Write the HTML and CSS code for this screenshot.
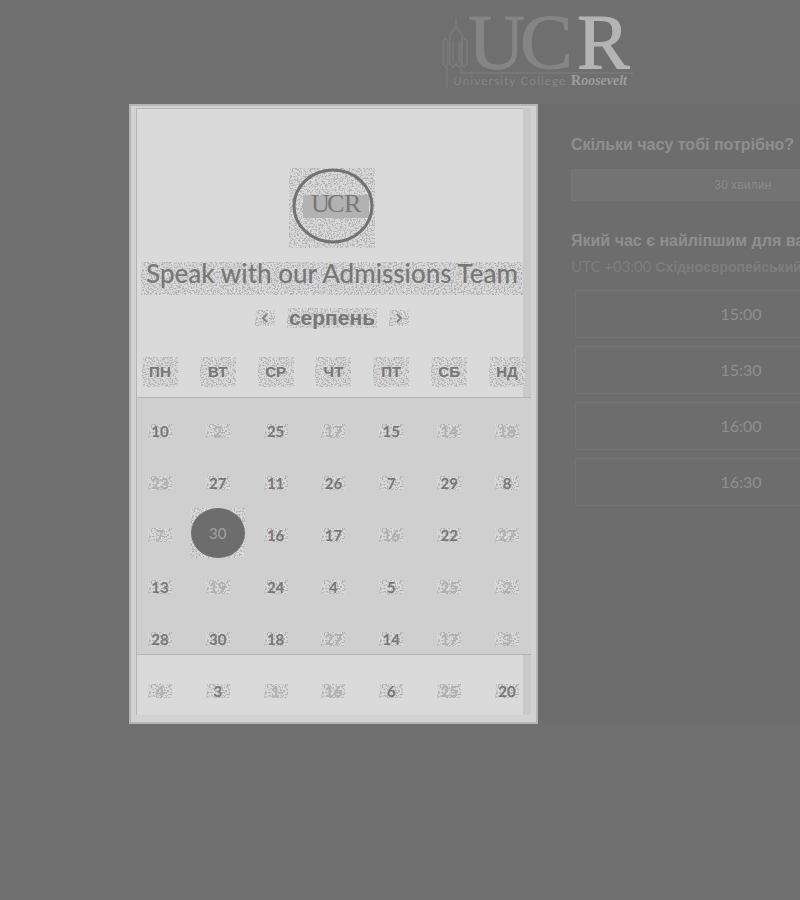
FILE: index.html
```html
<!DOCTYPE html>
<html lang="uk">
<head>
<meta charset="utf-8">
<meta name="viewport" content="width=device-width, initial-scale=1">
<title>Speak with our Admissions Team</title>
<link rel="stylesheet" href="styles.css">
</head>
<body>
<div class="page">
  <header class="brand">
    <svg class="brand-logo" viewBox="0 0 192 78" role="img" aria-label="University College Roosevelt">
      <g class="tower">
        <path d="M14 6v9M14 14l-6 9v4M14 14l6 9v4M8 27v25l3 3 3-3 3 3 3-3V27M11 29v22M17 29v22M1 29l2-3 3 3v23l-2 3-3-3zM19 29l2-3 4 3v23l-3 3-3-3zM5 55v21M19 55v6h172"/>
      </g>
      <g class="letters">
        <text x="26" y="56">U</text>
        <text x="78" y="56">C</text>
        <text class="letter-r" x="135" y="56">R</text>
      </g>
      <text class="tagline" x="11" y="73">University College</text>
      <text class="tagline-name" x="129" y="73">R<tspan class="tagline-italic">oosevelt</tspan></text>
    </svg>
  </header>
  <main class="booking">
    <section class="card">
      <div class="card-head">
        <div class="avatar grain">
          <svg viewBox="0 0 86 80" role="img" aria-label="UCR">
            <rect class="avatar-band" x="14" y="27" width="66" height="23"/>
            <ellipse class="avatar-ring" cx="44" cy="38" rx="39" ry="36"/>
            <text x="22" y="44">U</text><text x="38" y="44">C</text><text x="55" y="44">R</text>
          </svg>
        </div>
        <h1><span class="grain">Speak with our Admissions Team</span></h1>
        <div class="month">
          <button type="button" class="grain" aria-label="Попередній місяць"><svg viewBox="0 0 8 10"><path d="M6 1L2 5l4 4"/></svg></button>
          <h2 class="grain">серпень</h2>
          <button type="button" class="grain" aria-label="Наступний місяць"><svg viewBox="0 0 8 10"><path d="M2 1l4 4-4 4"/></svg></button>
        </div>
      </div>
      <table class="calendar">
        <thead>
          <tr><th><span class="grain">ПН</span></th><th><span class="grain">ВТ</span></th><th><span class="grain">СР</span></th><th><span class="grain">ЧТ</span></th><th><span class="grain">ПТ</span></th><th><span class="grain">СБ</span></th><th><span class="grain">НД</span></th></tr>
        </thead>
        <tbody>
          <tr><td><button class="day grain">10</button></td><td><button class="day grain off">2</button></td><td><button class="day grain">25</button></td><td><button class="day grain off">17</button></td><td><button class="day grain">15</button></td><td><button class="day grain off">14</button></td><td><button class="day grain off">18</button></td></tr>
          <tr><td><button class="day grain off">23</button></td><td><button class="day grain">27</button></td><td><button class="day grain">11</button></td><td><button class="day grain">26</button></td><td><button class="day grain">7</button></td><td><button class="day grain">29</button></td><td><button class="day grain">8</button></td></tr>
          <tr><td><button class="day grain off">7</button></td><td><div class="chosen grain"><button class="day-chosen">30</button></div></td><td><button class="day grain">16</button></td><td><button class="day grain">17</button></td><td><button class="day grain off">16</button></td><td><button class="day grain">22</button></td><td><button class="day grain off">27</button></td></tr>
          <tr><td><button class="day grain">13</button></td><td><button class="day grain off">19</button></td><td><button class="day grain">24</button></td><td><button class="day grain">4</button></td><td><button class="day grain">5</button></td><td><button class="day grain off">25</button></td><td><button class="day grain off">2</button></td></tr>
          <tr><td><button class="day grain">28</button></td><td><button class="day grain">30</button></td><td><button class="day grain">18</button></td><td><button class="day grain off">27</button></td><td><button class="day grain">14</button></td><td><button class="day grain off">17</button></td><td><button class="day grain off">3</button></td></tr>
          <tr><td><button class="day grain off">4</button></td><td><button class="day grain">3</button></td><td><button class="day grain off">1</button></td><td><button class="day grain off">16</button></td><td><button class="day grain">6</button></td><td><button class="day grain off">25</button></td><td><button class="day grain">20</button></td></tr>
        </tbody>
      </table>
    </section>
    <section class="times">
      <h3>Скільки часу тобі потрібно?</h3>
      <button type="button" class="duration">30 хвилин</button>
      <h3>Який час є найліпшим для вас?</h3>
      <p class="zone">UTC +03:00 <b>Східноєвропейський час</b></p>
      <div class="slots">
        <button type="button">15:00</button>
        <button type="button">15:30</button>
        <button type="button">16:00</button>
        <button type="button">16:30</button>
      </div>
    </section>
  </main>
</div>
</body>
</html>
```
FILE: styles.css
```css
* { box-sizing: border-box; }

body {
  margin: 0;
  background: #6f6f6f;
  color: #8f8f8f;
  font-family: Lato, "Liberation Sans", sans-serif;
}

h1, h2, h3, p { margin: 0; }

button {
  border: 0;
  padding: 0;
  background: none;
  color: inherit;
  font: inherit;
}

.page {
  min-height: 100vh;
  overflow-x: hidden;
  padding-left: 129px;
}

.brand, .booking { width: 818px; }

.brand {
  display: flex;
  justify-content: center;
  height: 104px;
  padding-top: 12px;
}

.brand-logo { width: 192px; height: 78px; }
.tower path { fill: none; stroke: #7b7b7b; stroke-width: 1.5; }
.letters { font: 79px "Liberation Serif", serif; fill: #858585; stroke: #858585; }
.letter-r { fill: #b4b4b4; stroke: #b4b4b4; }
.tagline { font: 12px Lato, sans-serif; letter-spacing: 1px; fill: #858585; }
.tagline-name { font: bold 14px "Liberation Serif", serif; fill: #9c9c9c; }
.tagline-italic { font-style: italic; }

.booking {
  display: grid;
  grid-template-columns: repeat(2, minmax(0, 1fr));
}

/* Speckled halo behind the card's texts */
.grain {
  background-image: url("data:image/svg+xml,%3Csvg xmlns='http://www.w3.org/2000/svg' width='400' height='120'%3E%3Cfilter id='n' x='0' y='0' width='1' height='1' color-interpolation-filters='sRGB'%3E%3CfeTurbulence type='fractalNoise' baseFrequency='.6' numOctaves='2'/%3E%3CfeColorMatrix values='1 0 0 0 0 1 0 0 0 0 1 0 0 0 0 0 0 0 0 1'/%3E%3CfeComponentTransfer%3E%3CfeFuncR type='discrete' tableValues='.7 .7 .7 .7 .78 .85 .85 .85 .93 .93'/%3E%3CfeFuncG type='discrete' tableValues='.7 .7 .7 .7 .78 .85 .85 .85 .93 .93'/%3E%3CfeFuncB type='discrete' tableValues='.7 .7 .7 .7 .78 .85 .85 .85 .93 .93'/%3E%3C/feComponentTransfer%3E%3C/filter%3E%3Crect width='400' height='120' filter='url(%23n)'/%3E%3C/svg%3E");
}

.card {
  border: 2px solid #b5b5b5;
  padding-bottom: 7px;
  background: #d2d2d2;
  color: #777777;
}

.card-head {
  display: flex;
  flex-direction: column;
  align-items: center;
  height: 240px;
  margin: 2px 13px 0 5px;
  border: solid #b4b4b4;
  border-width: 1px 0 0 1px;
  padding: 59px 0 0 4px;
  background: #dadada;
  box-shadow: 8px 0 #c9c9c9;
}

.avatar { width: 86px; height: 80px; }
.avatar svg { display: block; width: 86px; height: 80px; }
.avatar-band { fill: #b2b2b2; }
.avatar-ring { fill: none; stroke: #727272; stroke-width: 3; }
.avatar text { font: 26px "Liberation Serif", serif; fill: #777777; }

h1 {
  margin-top: 14px;
  font-size: 26px;
  font-weight: 500;
  white-space: nowrap;
}

h1 span { display: block; padding: 0 5px 11px; line-height: 22px; }

.month {
  display: flex;
  align-items: center;
  gap: 12px;
  margin-top: 13px;
}

.month h2 {
  padding: 0 2px;
  font: bold 21px/20px "Liberation Sans", sans-serif;
}

.month button { display: flex; padding: 3px 6px; }
.month svg { width: 8px; height: 10px; fill: none; stroke: #858585; stroke-width: 2; }

/* The sheet's edges, its middle band, and the lighter zones above and below it */
.calendar {
  width: 100%;
  border-collapse: collapse;
  table-layout: fixed;
  background:
    linear-gradient(#d2d2d2, #d2d2d2) left / 5px 100% no-repeat,
    linear-gradient(#d2d2d2, #d2d2d2) right / 5px 100% no-repeat,
    linear-gradient(#b4b4b4, #b4b4b4) 5px 0 / 1px 100% no-repeat,
    linear-gradient(#c9c9c9 49px, transparent 49px 307px, #c9c9c9 307px) right / 13px 100% no-repeat,
    linear-gradient(#dadada 49px, #b4b4b4 49px 50px, #cfcfcf 50px 306px, #b4b4b4 306px 307px, #dadada 307px);
}

.calendar th, .calendar td {
  padding: 0;
  text-align: center;
}

.calendar th { height: 55px; padding-bottom: 8px; font: bold 15px/30px "Liberation Sans", sans-serif; }
.calendar th span { display: block; width: 36px; margin: auto; }
.calendar td { height: 52px; }

.day {
  width: 24px;
  height: 14px;
  font-size: 15px;
  font-weight: 700;
  line-height: 14px;
  vertical-align: middle;
}

.off { color: #b0b0b0; }

.chosen { width: 54px; height: 50px; margin: auto; }

.day-chosen {
  width: 54px;
  height: 50px;
  border-radius: 50%;
  background: #6d6d6d;
  color: #a0a0a0;
  font-size: 15px;
}

.times {
  padding: 31px 32px 0 33px;
  background: #6d6d6d;
  white-space: nowrap;
}

.times h3 { font: bold 16px/20px "Liberation Sans", sans-serif; }

.duration {
  width: 100%;
  height: 32px;
  margin: 14px 0 30px;
  border: 1px solid #777777;
  border-radius: 2px;
  background: #737373;
  color: #888888;
  font: 12px Roboto, sans-serif;
}

.zone { overflow: hidden; color: #7d7d7d; font-size: 15px; line-height: 30px; }
.zone b { font: bold 14px "Liberation Sans", sans-serif; }

.slots {
  display: grid;
  gap: 8px;
  margin: 9px 8px 0 4px;
}

.slots button {
  height: 48px;
  border: 1px solid #747474;
  border-radius: 3px;
  padding-bottom: 2px;
  font-size: 16px;
}
```
